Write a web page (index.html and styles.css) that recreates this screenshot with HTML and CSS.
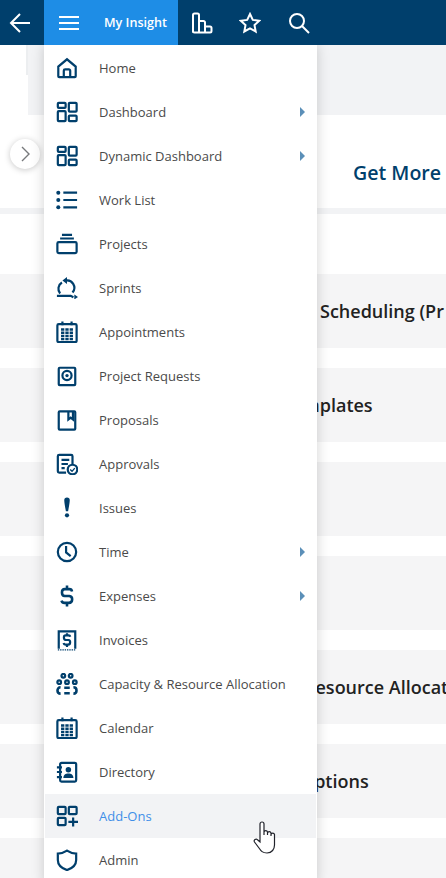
FILE: index.html
```html
<!DOCTYPE html>
<html lang="en">
<head>
    <meta charset="UTF-8">
    <meta name="viewport" content="width=device-width, initial-scale=1.0">
    <title>My Insight</title>
    <link rel="stylesheet" href="styles.css">
</head>
<body>
    <header class="topbar">
        <a class="back-btn">
            <svg width="22" height="22" viewBox="0 0 22 22"><path d="M21 11H2M11 2l-9 9 9 9"/></svg>
        </a>
        <div class="insight-tab">
            <svg width="22" height="16" viewBox="0 0 22 16"><path d="M1 2h20M1 8h20M1 14h20"/></svg>
            <span>My Insight</span>
        </div>
        <a class="top-icon chart-icon">
            <svg width="22" height="22" viewBox="0 0 22 22"><path d="M2 20.500V3a1.500 1.500 0 0 1 1.500-1.500h3A1.500 1.500 0 0 1 8 3v17.500M8 9h4.500a1.500 1.500 0 0 1 1.500 1.500v10M14 14.500h5a1.500 1.500 0 0 1 1.500 1.500v3a1.500 1.500 0 0 1-1.500 1.500H3.500A1.500 1.500 0 0 1 2 19"/></svg>
        </a>
        <a class="top-icon star-icon">
            <svg width="22" height="22" viewBox="0 0 22 22"><path d="M11 2l2.800 5.900 6.400.8-4.700 4.400 1.200 6.400L11 16.400l-5.700 3.100 1.200-6.400L1.800 8.700l6.400-.8z"/></svg>
        </a>
        <a class="top-icon search-icon">
            <svg width="22" height="22" viewBox="0 0 22 22"><circle cx="9" cy="9" r="7"/><path d="M14 14l7 7"/></svg>
        </a>
    </header>

    <main class="content">
        <div class="content-head"></div>
        <div class="get-more">Get More</div>
        <div class="divider"></div>
        <div class="addon-list">
            <div class="addon-row"><span class="name-1">Scheduling (Pr</span></div>
            <div class="addon-row"><span class="name-2">Templates</span></div>
            <div class="addon-row"></div>
            <div class="addon-row"></div>
            <div class="addon-row"><span class="name-3">Resource Allocati</span></div>
            <div class="addon-row"><span class="name-4">Options</span></div>
            <div class="addon-row"></div>
        </div>
        <button class="side-toggle">
            <svg width="10" height="16" viewBox="0 0 10 16"><path d="M2 1l7 7-7 7"/></svg>
        </button>

        <nav class="menu">
            <a class="menu-item">
                <svg class="menu-icon" viewBox="0 0 24 24"><path d="M2.500 21V10.500L12 2.500l9.500 8V21a1 1 0 0 1-1 1h-17a1 1 0 0 1-1-1zM8.500 22v-7a1.500 1.500 0 0 1 1.500-1.500h4a1.500 1.500 0 0 1 1.500 1.500v7"/></svg>
                <span>Home</span>
            </a>
            <a class="menu-item has-sub">
                <svg class="menu-icon" viewBox="0 0 24 24"><rect x="2" y="2" width="8.500" height="5.500" rx="1"/><rect x="14" y="2" width="8.500" height="9.500" rx="1"/><rect x="2" y="11" width="8.500" height="11" rx="1"/><rect x="14" y="16" width="8.500" height="6" rx="1"/></svg>
                <span>Dashboard</span>
            </a>
            <a class="menu-item has-sub">
                <svg class="menu-icon" viewBox="0 0 24 24"><rect x="2" y="2" width="8.500" height="5.500" rx="1"/><rect x="14" y="2" width="8.500" height="9.500" rx="1"/><rect x="2" y="11" width="8.500" height="11" rx="1"/><rect x="14" y="16" width="8.500" height="6" rx="1"/></svg>
                <span>Dynamic Dashboard</span>
            </a>
            <a class="menu-item">
                <svg class="menu-icon" viewBox="0 0 24 24"><path d="M8 4h15M8 12h15M8 20h15"/><circle class="solid" cx="2.500" cy="4" r="2.200"/><circle class="solid" cx="2.500" cy="12" r="2.200"/><circle class="solid" cx="2.500" cy="20" r="2.200"/></svg>
                <span>Work List</span>
            </a>
            <a class="menu-item">
                <svg class="menu-icon" viewBox="0 0 24 24"><path d="M6.500 2h11M4.500 6h15"/><rect x="1.500" y="10" width="21" height="12" rx="1.500"/></svg>
                <span>Projects</span>
            </a>
            <a class="menu-item">
                <svg class="menu-icon" viewBox="0 0 24 24"><path d="M10 4a8 8 0 0 1 8 13M6.500 6a8 8 0 0 0-2 12M1 20.500h15l3 1.500"/><path class="solid" d="M12 0v7.500L7 3.700zM20 19v5.500l4-2.700z"/></svg>
                <span>Sprints</span>
            </a>
            <a class="menu-item">
                <svg class="menu-icon" viewBox="0 0 24 24"><rect x="1.500" y="3.500" width="21" height="19.500" rx="1.500"/><path d="M7 .5v4M17 .5v4"/><path class="grid" d="M5.500 9.200h13M5.500 12.800h13M5.500 16.400h13M5.500 19.800h13"/></svg>
                <span>Appointments</span>
            </a>
            <a class="menu-item">
                <svg class="menu-icon" viewBox="0 0 24 24"><rect x="3" y="3" width="18" height="19" rx="1"/><circle cx="12" cy="11.500" r="5"/><circle class="solid" cx="12" cy="11.500" r="1.800"/></svg>
                <span>Project Requests</span>
            </a>
            <a class="menu-item">
                <svg class="menu-icon" viewBox="0 0 24 24"><rect x="3" y="2.500" width="18" height="20" rx="1"/><path d="M13.500 3v8.500l2.500-2 2.500 2V3"/></svg>
                <span>Proposals</span>
            </a>
            <a class="menu-item">
                <svg class="menu-icon" viewBox="0 0 24 24"><path d="M11 21.500H3.500A1.500 1.500 0 0 1 2 20V3.500A1.500 1.500 0 0 1 3.500 2H16.500A1.500 1.500 0 0 1 18 3.500V12M6 7.500h8.500M6 12h7M6 16.500h3.500"/><circle cx="18" cy="18" r="5.200"/><path class="thin" d="M15.500 18l2 2 3-3.500"/></svg>
                <span>Approvals</span>
            </a>
            <a class="menu-item">
                <svg class="menu-icon" viewBox="0 0 24 24"><path class="solid" d="M9 3.500a3 3 0 0 1 6 0c0 3-1.200 8.500-1.800 12h-2.400C10.200 12 9 6.500 9 3.500z"/><circle class="solid" cx="12" cy="20" r="2.300"/></svg>
                <span>Issues</span>
            </a>
            <a class="menu-item has-sub">
                <svg class="menu-icon" viewBox="0 0 24 24"><circle cx="12" cy="12" r="10"/><path d="M11 5.500v7l5 4"/></svg>
                <span>Time</span>
            </a>
            <a class="menu-item has-sub">
                <svg class="menu-icon" viewBox="0 0 24 24"><path class="heavy" d="M17.500 7a3 3 0 0 0-3-2.500h-5c-4 0-4 7 0 7.500h5c4.500 .5 4 7.500-.5 7.500H9.500A3.500 3.500 0 0 1 6 17M12 .5v4M12 19.500v4"/></svg>
                <span>Expenses</span>
            </a>
            <a class="menu-item">
                <svg class="menu-icon" viewBox="0 0 24 24"><path d="M3 21.500V2.500h18v19"/><path class="thin" stroke-dasharray="1.500 1" d="M2 22.800h20"/><path d="M15.500 8.500a1.800 1.800 0 0 0-1.800-1.500h-3.200c-2.500 0-2.500 4.500 0 5h3c2.700 .3 2.500 5-.2 5h-3a2 2 0 0 1-2-1.700M12 4.500v2.500M12 17v2.500"/></svg>
                <span>Invoices</span>
            </a>
            <a class="menu-item">
                <svg class="menu-icon" viewBox="0 0 24 24"><circle cx="8" cy="3" r="2"/><circle cx="16" cy="3" r="2"/><circle cx="3.500" cy="10" r="2"/><circle cx="12" cy="10" r="2"/><circle cx="20.500" cy="10" r="2"/><path class="heavy" d="M5 15.500c-4.500 0-4.500 7 0 7M19 15.500c4.500 0 4.500 7 0 7M9 16h6M9 22h6"/></svg>
                <span>Capacity &amp; Resource Allocation</span>
            </a>
            <a class="menu-item">
                <svg class="menu-icon" viewBox="0 0 24 24"><rect x="1.500" y="3.500" width="21" height="19.500" rx="1.500"/><path d="M7 .5v4M17 .5v4"/><path class="grid" d="M5.500 9.200h13M5.500 12.800h13M5.500 16.400h13M5.500 19.800h13"/></svg>
                <span>Calendar</span>
            </a>
            <a class="menu-item">
                <svg class="menu-icon" viewBox="0 0 24 24"><rect x="4.500" y="2" width="17.500" height="20.500" rx="1.500"/><path d="M1 7h5.500M1 12h5.500M1 17.500h5.500"/><circle class="solid" cx="13.500" cy="9.500" r="3"/><path class="solid" d="M8 18.500c0-3.500 2.500-5 5.500-5s5.500 1.500 5.500 5z"/></svg>
                <span>Directory</span>
            </a>
            <a class="menu-item active">
                <svg class="menu-icon" viewBox="0 0 24 24"><rect x="2" y="2" width="8.500" height="8" rx="1"/><rect x="14" y="2" width="8.500" height="8" rx="1"/><rect x="2" y="14" width="8.500" height="8" rx="1"/><path d="M13.500 18.500h10.500M18.700 13.500v10"/></svg>
                <span>Add-Ons</span>
            </a>
            <a class="menu-item">
                <svg class="menu-icon" viewBox="0 0 24 24"><path d="M12 1.800c3 2 6.500 3.200 10 3.200v7c0 5-4 9-10 11C6 21 2 17 2 12V5c3.500 0 7-1.200 10-3.200z"/></svg>
                <span>Admin</span>
            </a>
        </nav>

        <svg class="hand-cursor" width="24" height="33" viewBox="0 0 24 33"><path d="M7 21V3a2 2 0 0 1 4 0v11V11a1.800 1.800 0 0 1 3.500 0v3V12a1.800 1.800 0 0 1 3.500 0v3V13.500a1.800 1.800 0 0 1 3.500 0V24c0 4-2.500 8-7.500 8-4.500 0-6-2-8-5l-4.500-6a1.900 1.900 0 0 1 3-2.300z"/></svg>
    </main>
</body>
</html>
```

FILE: styles.css
```css
* {
    box-sizing: border-box;
}

html, body {
    margin: 0;
    height: 100%;
    overflow: hidden;
    background-color: #ffffff;
    font-family: "Open Sans", sans-serif;
}

/* Barra superior */
.topbar {
    display: flex;
    height: 45px;
    background-color: #003f6c;
}

.topbar svg {
    fill: none;
    stroke: #ffffff;
    stroke-width: 2;
}

.back-btn {
    display: flex;
    align-items: center;
    justify-content: center;
    width: 44px;
    padding-right: 4px;
}

.insight-tab {
    display: flex;
    align-items: center;
    width: 134px;
    padding-left: 14px;
    background-color: #1e8de6;
    color: #ffffff;
    font-size: 12.600px;
    font-weight: 600;
}

.insight-tab span {
    margin-left: 24px;
}

.top-icon {
    display: flex;
    align-items: center;
}

.chart-icon {
    margin-left: 13px;
}

.star-icon {
    margin-left: 26px;
}

.search-icon {
    margin-left: 27px;
}

/* Contenido detras del menu */
.content {
    position: relative;
    height: 833px;
    overflow: hidden;
}

.content-head {
    position: relative;
    height: 70px;
    margin-left: 28px;
    background-color: #f2f3f5;
}

.content-head::before {
    content: "";
    position: absolute;
    left: -2px;
    top: 0;
    width: 2px;
    height: 30px;
    background-color: #eceef0;
}

.get-more {
    display: flex;
    align-items: center;
    height: 93px;
    padding-top: 22px;
    padding-left: 353px;
    color: #003f6c;
    font-size: 19.600px;
    font-weight: 600;
    white-space: nowrap;
}

.divider {
    height: 6px;
    background-color: #f2f3f5;
}

.addon-list {
    display: flex;
    flex-direction: column;
    gap: 20px;
    margin-top: 60px;
}

.addon-row {
    display: flex;
    align-items: center;
    flex-shrink: 0;
    height: 74px;
    overflow: hidden;
    background-color: #f5f5f6;
    color: #222222;
    font-size: 18px;
    font-weight: 600;
    white-space: nowrap;
}

.name-1 {
    margin-left: 320px;
}

.name-2 {
    margin-left: 282px;
}

.name-3 {
    margin-left: 304px;
}

.name-4 {
    margin-left: 300px;
}

.side-toggle {
    position: absolute;
    left: 10px;
    top: 94px;
    display: flex;
    align-items: center;
    justify-content: center;
    width: 30px;
    height: 30px;
    padding: 0;
    border: none;
    border-radius: 50%;
    background-color: #ffffff;
    box-shadow: 0 1px 6px rgba(0, 0, 0, 0.22);
}

.side-toggle svg {
    fill: none;
    stroke: #77797c;
    stroke-width: 1.4;
}

/* Menu desplegable */
.menu {
    position: absolute;
    left: 44px;
    top: 0;
    width: 273px;
    height: 840px;
    padding: 1px 1px 0;
    background-color: #ffffff;
    box-shadow: 0 0 12px rgba(0, 0, 0, 0.18);
}

.menu-item {
    position: relative;
    display: flex;
    align-items: center;
    height: 44px;
    padding-left: 11px;
    color: #4a4a4a;
    font-size: 13px;
}

.menu-item.active {
    background-color: #f2f3f5;
    color: #3f8fe8;
}

.has-sub::after {
    content: "";
    position: absolute;
    right: 11px;
    top: 17px;
    border-left: 5px solid #5b8fb8;
    border-top: 5px solid transparent;
    border-bottom: 5px solid transparent;
}

.menu-icon {
    flex-shrink: 0;
    width: 22px;
    height: 22px;
    margin-right: 21px;
    fill: none;
    stroke: #003f6c;
    stroke-width: 2.400;
}

.menu-icon .solid {
    fill: #003f6c;
    stroke: none;
}

.menu-icon .thin {
    stroke-width: 1.500;
}

.menu-icon .heavy {
    stroke-width: 2.800;
}

.menu-icon .grid {
    stroke-width: 2.600;
    stroke-dasharray: 3.600 1.100;
}

.hand-cursor {
    position: absolute;
    left: 253px;
    top: 776px;
    fill: #ffffff;
    stroke: #20222a;
    stroke-width: 1.200;
}
```
